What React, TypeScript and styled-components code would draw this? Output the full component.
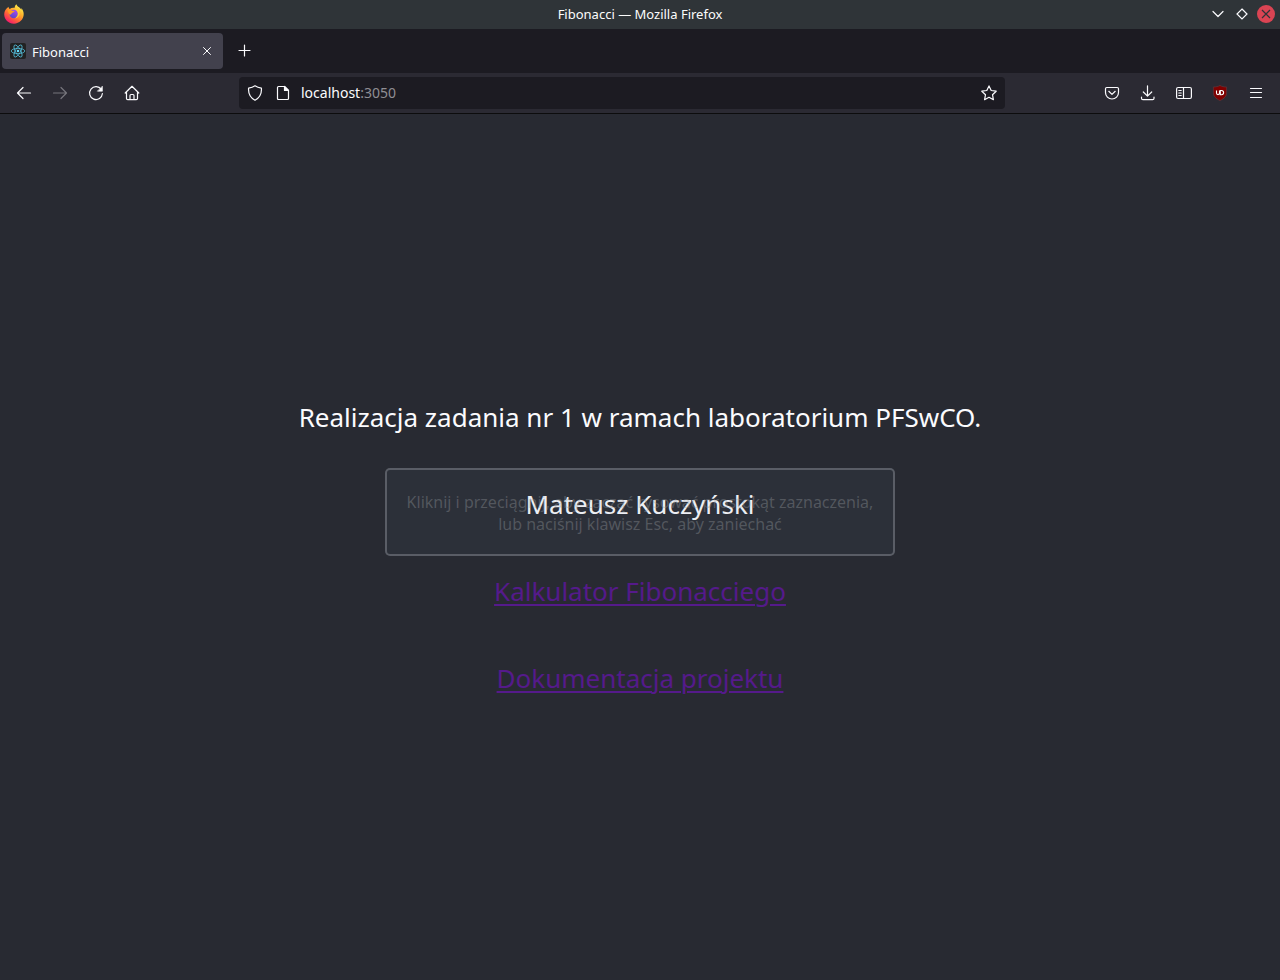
import React from 'react';
import styled, { createGlobalStyle } from 'styled-components';

const Global = createGlobalStyle`
  * { box-sizing: border-box; }
  html, body, #root { height: 100%; }
  body {
    margin: 0;
    background: #282a32;
    font-family: "Noto Sans", "Open Sans", sans-serif;
    color: #fbfbfe;
  }
  button, input { font: inherit; color: inherit; }
`;

const Window = styled.div`
  display: flex;
  flex-direction: column;
  min-height: 100%;
`;

const TitleBar = styled.header`
  display: grid;
  grid-template-columns: 1fr auto 1fr;
  align-items: center;
  height: 29px;
  padding: 0 4px 1px;
  background: #2f3438;
  color: #fcfcfc;
`;

const WindowTitle = styled.span`
  font-size: 13px;
  line-height: 20px;
`;

const WindowControls = styled.div`
  display: flex;
  justify-content: flex-end;
  gap: 4px;
`;

const IconButton = styled.button<{ $size: number; $dim?: boolean }>`
  display: flex;
  flex: none;
  align-items: center;
  justify-content: center;
  width: ${(p) => p.$size}px;
  height: ${(p) => p.$size}px;
  padding: 0;
  border: 0;
  border-radius: 4px;
  background: transparent;
  color: ${(p) => (p.$dim ? '#76757c' : '#fbfbfe')};
`;

const TabStrip = styled.nav`
  display: flex;
  align-items: center;
  gap: 4px;
  height: 44px;
  padding: 0 2px;
  background: #1c1b22;
`;

const Tab = styled.div`
  display: flex;
  align-items: center;
  width: 221px;
  height: 36px;
  padding: 0 6px 0 8px;
  border-radius: 4px;
  background: #42414d;
`;

const TabTitle = styled.span`
  flex: 1;
  padding: 2px 0 0 6px;
  font-size: 13px;
  line-height: 20px;
`;

const Toolbar = styled.div`
  display: flex;
  align-items: center;
  height: 41px;
  padding: 0 8px;
  border-bottom: 1px solid #0c0c0d;
  background: #2b2a33;
`;

const ToolGroup = styled.div`
  display: flex;
  flex: 1;
  gap: 4px;
`;

const ActionGroup = styled(ToolGroup)`
  justify-content: flex-end;
`;

const AddressBar = styled.div`
  display: flex;
  flex: 0 1 766px;
  align-items: center;
  height: 32px;
  margin-right: 36px;
  border-radius: 4px;
  background: #1c1b22;
`;

const AddressField = styled.label`
  position: relative;
  display: flex;
  flex: 1;
  padding-left: 6px;
  font-size: 14px;
  line-height: 20px;
`;

const AddressInput = styled.input`
  width: 100%;
  padding: 0;
  border: 0;
  outline: 0;
  background: transparent;
  color: transparent;
`;

const AddressText = styled.span`
  position: absolute;
  inset: 0 auto auto 6px;
  pointer-events: none;
`;

const Port = styled.span`
  color: #8f8e94;
`;

const Page = styled.main`
  display: flex;
  flex: 1;
  flex-direction: column;
  align-items: center;
  justify-content: center;
  gap: 51px;
  font-size: 26px;
  line-height: 36px;
  text-align: center;
`;

const Line = styled.p`
  margin: 0;
`;

const NameLine = styled(Line)`
  position: relative;
`;

const Link = styled.a`
  color: #551a8b;
  text-decoration-thickness: 2px;
  text-underline-offset: 3px;
`;

const SelectionHint = styled.span`
  position: absolute;
  top: -18px;
  left: 50%;
  width: 510px;
  padding: 21px 18px 19px;
  border: 2px solid rgba(105, 109, 117, 0.75);
  border-radius: 5px;
  background: rgba(92, 116, 132, 0.09);
  color: rgba(150, 154, 158, 0.38);
  font-size: 16px;
  line-height: 22px;
  transform: translateX(-50%);
`;

type IconProps = { children: React.ReactNode; size?: number };

const Icon = ({ children, size = 16 }: IconProps) => (
  <svg
    width={size}
    height={size}
    viewBox="0 0 16 16"
    fill="none"
    stroke="currentColor"
    strokeWidth="1.2"
    strokeLinecap="round"
    strokeLinejoin="round"
    aria-hidden="true"
  >
    {children}
  </svg>
);

const FirefoxLogo = () => (
  <svg width="20" height="20" viewBox="0 0 20 20" aria-hidden="true">
    <defs>
      <linearGradient id="flame" x1="0.85" y1="0.1" x2="0.25" y2="0.95">
        <stop offset="0" stopColor="#fff44f" />
        <stop offset="0.35" stopColor="#ffae2b" />
        <stop offset="0.65" stopColor="#ff6a35" />
        <stop offset="1" stopColor="#f4196c" />
      </linearGradient>
      <linearGradient id="globe" x1="0.7" y1="0" x2="0.3" y2="1">
        <stop offset="0" stopColor="#a44bf0" />
        <stop offset="1" stopColor="#5a45c8" />
      </linearGradient>
    </defs>
    <path d="M12.4.2c-1.2 1-1.8 2.300-1.700 3.600C8.600 3.500 7 3.900 5.800 4.900 4.900 4.300 4.600 3.600 4.600 2.700 2 4.400.2 7 .2 10.300.2 15.600 4.500 19.700 9.900 19.700s9.800-4.200 9.800-9.600c0-2.500-1-4.900-2.400-6.200.2.800.2 1.400.1 1.900C16.300 3.300 12.900 2.600 12.400.2Z" fill="url(#flame)" />
    <circle cx="9.800" cy="10" r="4.300" fill="url(#globe)" />
    <path d="M3.800 6.200c1.700-.7 3.300-.4 4.200.5l2.600.3c-.3 1-1.300 1.400-2.300 1.700-.4 1.100-1.600 1-2 2.200-1.200-1-2.300-2.600-2.500-4.700Z" fill="#ff9b22" />
    <path d="M11 4c3.200.9 4.900 3.200 4.600 6.400-.8 2.400-2.400 3.700-4.600 4 2.400-1.500 3.300-4 2.500-6.300-.5-1.500-1.700-2.400-2.500-4.100Z" fill="#ffce35" />
  </svg>
);

const ReactLogo = () => (
  <svg width="16" height="16" viewBox="0 0 16 16" aria-hidden="true">
    <rect width="16" height="16" rx="2" fill="#222" />
    <g fill="none" stroke="#53bcd8" strokeWidth="0.8">
      <ellipse cx="8" cy="8" rx="6.800" ry="2.600" />
      <ellipse cx="8" cy="8" rx="6.800" ry="2.600" transform="rotate(60 8 8)" />
      <ellipse cx="8" cy="8" rx="6.800" ry="2.600" transform="rotate(120 8 8)" />
    </g>
    <circle cx="8" cy="8" r="1.300" fill="#61dafb" />
  </svg>
);

const BlockerLogo = () => (
  <svg width="16" height="16" viewBox="0 0 16 16" aria-hidden="true">
    <path d="M8 .4c1.900 1.200 4 1.500 6.600 1.600v5.500c0 4-2.300 5.900-6.600 8.100-4.300-2.200-6.600-4.100-6.600-8.100V2C4 1.900 6.100 1.600 8 .4Z" fill="#800000" stroke="#5f3237" strokeWidth="0.800" />
    <path d="M4.500 5.500v2.600a1.500 1.500 0 0 0 3 0V5.500M8.300 5.500v4.200h1.200a2.100 2.100 0 0 0 0-4.200Z" fill="none" stroke="#fff" strokeWidth="1.100" />
  </svg>
);

export default function App() {
  return (
    <>
      <Global />
      <Window>
        <TitleBar>
          <FirefoxLogo />
          <WindowTitle>Fibonacci — Mozilla Firefox</WindowTitle>
          <WindowControls>
            <IconButton $size={20} aria-label="Minimize">
              <Icon><path d="m3 5.500 5 5 5-5" /></Icon>
            </IconButton>
            <IconButton $size={20} aria-label="Maximize">
              <Icon><path d="m8 3 5 5-5 5-5-5Z" strokeLinejoin="miter" /></Icon>
            </IconButton>
            <IconButton $size={20} aria-label="Close window">
              <svg width="20" height="20" viewBox="0 0 20 20" aria-hidden="true">
                <circle cx="10" cy="10" r="9" fill="#da4453" />
                <path d="m6 6 8 8m0-8-8 8" stroke="#2f3438" strokeWidth="1.200" />
              </svg>
            </IconButton>
          </WindowControls>
        </TitleBar>

        <TabStrip>
          <Tab>
            <ReactLogo />
            <TabTitle>Fibonacci</TabTitle>
            <IconButton $size={20} aria-label="Close tab">
              <Icon><path d="m4.500 4.500 7 7m0-7-7 7" strokeWidth="1" /></Icon>
            </IconButton>
          </Tab>
          <IconButton $size={36} aria-label="New tab">
            <Icon><path d="M7.500 2v11M2 7.500h11" /></Icon>
          </IconButton>
        </TabStrip>

        <Toolbar>
          <ToolGroup>
            <IconButton $size={32} aria-label="Back">
              <Icon><path d="M14.500 8h-13M7 2.500 1.500 8 7 13.500" /></Icon>
            </IconButton>
            <IconButton $size={32} $dim aria-label="Forward">
              <Icon><path d="M1.500 8h13M9 2.500 14.500 8 9 13.500" /></Icon>
            </IconButton>
            <IconButton $size={32} aria-label="Reload">
              <Icon>
                <path d="M13.300 4.500A6.400 6.400 0 1 0 14.400 8.500" />
                <path d="M14.400 1.500v4.700H9.700Z" fill="currentColor" strokeWidth="0.600" />
              </Icon>
            </IconButton>
            <IconButton $size={32} aria-label="Home">
              <Icon>
                <path d="M1.200 8 8 1.300 14.800 8M2.500 7v6.500c0 .8.500 1.200 1.200 1.200h8.600c.7 0 1.200-.4 1.200-1.200V7M6 14.500v-4c0-.6.400-1 1-1h2c.6 0 1 .4 1 1v4" />
              </Icon>
            </IconButton>
          </ToolGroup>

          <AddressBar>
            <IconButton $size={32} aria-label="Tracking protection">
              <Icon><path d="M8 .8c1.800 1.300 3.800 2 6.400 2.300.5 5.900-1.900 9.800-6.400 12.200C3.500 12.900 1.100 9 1.600 3.100 4.200 2.800 6.200 2.100 8 .8Z" /></Icon>
            </IconButton>
            <IconButton $size={24} aria-label="Site information">
              <Icon>
                <path d="M3.500 1.500h6l4 4v8c0 .6-.4 1-1 1h-9c-.6 0-1-.4-1-1v-11c0-.6.400-1 1-1Z" />
                <path d="M9.500 1.500v4h4Z" fill="currentColor" />
              </Icon>
            </IconButton>
            <AddressField>
              <AddressInput aria-label="Address" defaultValue="localhost:3050" />
              <AddressText aria-hidden="true">localhost<Port>:3050</Port></AddressText>
            </AddressField>
            <IconButton $size={32} aria-label="Bookmark this page">
              <Icon><path d="m8 .9 2.200 4.600 5 .7-3.700 3.500.9 5L8 12.300l-4.400 2.400.9-5L.8 6.200l5-.7Z" /></Icon>
            </IconButton>
          </AddressBar>

          <ActionGroup>
            <IconButton $size={32} aria-label="Save to Pocket">
              <Icon>
                <path d="M2.800 2.500h10.400c.8 0 1.300.5 1.300 1.300v3.700a6.500 6.500 0 0 1-13 0V3.800c0-.8.500-1.300 1.300-1.300Z" />
                <path d="M4.800 6.300 8 9.400l3.200-3.100" />
              </Icon>
            </IconButton>
            <IconButton $size={32} aria-label="Downloads">
              <Icon><path d="M7.500.8V11M3.300 7l4.200 4.200L11.700 7M1.500 12v1.200c0 .9.500 1.500 1.400 1.500h9.700c.9 0 1.400-.6 1.400-1.500V12" /></Icon>
            </IconButton>
            <IconButton $size={32} aria-label="Sidebars">
              <Icon>
                <rect x="0.600" y="2.500" width="14.800" height="11" rx="1.500" />
                <path d="M7.500 2.500v11M2.800 5.500h2.400M2.800 8h2.400M2.800 10.500h2.400" />
              </Icon>
            </IconButton>
            <IconButton $size={32} aria-label="uBlock Origin">
              <BlockerLogo />
            </IconButton>
            <IconButton $size={32} aria-label="Application menu">
              <Icon><path d="M2.500 3.500h11M2.500 7.500h11M2.500 12.500h11" /></Icon>
            </IconButton>
          </ActionGroup>
        </Toolbar>

        <Page>
          <Line>Realizacja zadania nr 1 w ramach laboratorium PFSwCO.</Line>
          <NameLine>
            Mateusz Kuczyński
            <SelectionHint>
              Kliknij i przeciągnij, aby zacząć rysować prostokąt zaznaczenia, lub naciśnij klawisz Esc, aby zaniechać
            </SelectionHint>
          </NameLine>
          <Line><Link href="#kalkulator">Kalkulator Fibonacciego</Link></Line>
          <Line><Link href="#dokumentacja">Dokumentacja projektu</Link></Line>
        </Page>
      </Window>
    </>
  );
}
